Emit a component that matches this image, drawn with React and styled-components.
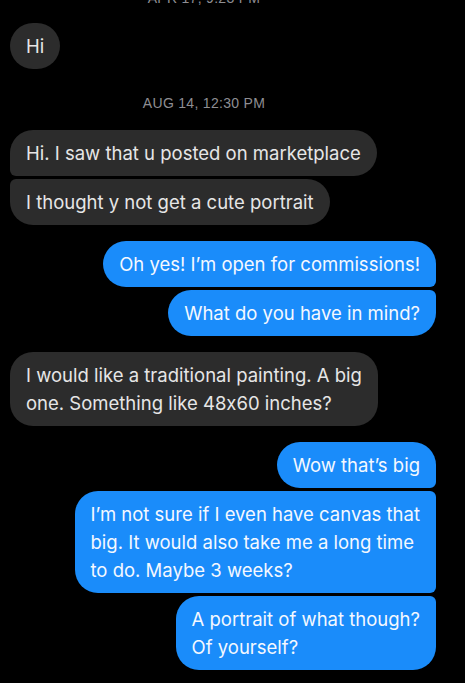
import React from 'react'
import styled, { createGlobalStyle, css } from 'styled-components'

const GlobalStyle = createGlobalStyle`
  html, body {
    margin: 0;
    padding: 0;
    background: #000;
  }
  body {
    font-family: Inter, "Liberation Sans", Arial, sans-serif;
    font-feature-settings: "calt" 0;
    -webkit-font-smoothing: antialiased;
  }
`

const Thread = styled.div`
  display: flex;
  flex-direction: column;
  padding: 0 29px 0 10px;
  margin-top: -12px;
  height: 695px;
  overflow: hidden;
`

const Stamp = styled.div`
  color: #8e8e93;
  font-family: "Liberation Sans", Arial, sans-serif;
  font-size: 14px;
  letter-spacing: 0.3px;
  line-height: 20px;
  text-align: center;
  padding-right: 38px;
  margin: ${(p) => (p.first ? '0 0 15px' : '24px 0 17px')};
`

const Group = styled.div`
  display: flex;
  flex-direction: column;
  align-items: ${(p) => (p.out ? 'flex-end' : 'flex-start')};
  gap: 3px;
  & + & {
    margin-top: 16px;
  }
`

const big = 23
const small = 6

const corners = {
  single: [big, big, big, big],
  first: [big, big, big, small],
  middle: [small, big, big, small],
  last: [small, big, big, big]
}

const Bubble = styled.div`
  box-sizing: border-box;
  padding: 9px 16px;
  font-size: 18.5px;
  line-height: 28px;
  white-space: nowrap;
  ${(p) => {
    const [tl, tr, br, bl] = corners[p.pos]
    return p.out
      ? css`
          background: #1a8cfa;
          color: #f4f8ff;
          border-radius: ${tr}px ${tl}px ${bl}px ${br}px;
        `
      : css`
          background: #2c2c2c;
          color: #e6e6e6;
          border-radius: ${tl}px ${tr}px ${br}px ${bl}px;
        `
  }}
`

const thread = [
  { stamp: 'APR 17, 9:23 PM', first: true },
  { out: false, lines: [['Hi']] },
  { stamp: 'AUG 14, 12:30 PM' },
  {
    out: false,
    lines: [['Hi. I saw that u posted on marketplace'], ['I thought y not get a cute portrait']]
  },
  {
    out: true,
    lines: [['Oh yes! I’m open for commissions!'], ['What do you have in mind?']]
  },
  {
    out: false,
    lines: [['I would like a traditional painting. A big', 'one. Something like 48x60 inches?']]
  },
  {
    out: true,
    lines: [
      ['Wow that’s big'],
      [
        'I’m not sure if I even have canvas that',
        'big. It would also take me a long time',
        'to do. Maybe 3 weeks?'
      ],
      ['A portrait of what though?', 'Of yourself?']
    ]
  }
]

function position (i, n) {
  if (n === 1) return 'single'
  if (i === 0) return 'first'
  if (i === n - 1) return 'last'
  return 'middle'
}

export default function App () {
  return (
    <>
      <GlobalStyle />
      <Thread>
        {thread.map((item, k) =>
          item.stamp
            ? <Stamp key={k} first={item.first}>{item.stamp}</Stamp>
            : (
              <Group key={k} out={item.out}>
                {item.lines.map((msg, i) => (
                  <Bubble key={i} out={item.out} pos={position(i, item.lines.length)}>
                    {msg.map((line, j) => (
                      <React.Fragment key={j}>
                        {j > 0 && <br />}
                        {line}
                      </React.Fragment>
                    ))}
                  </Bubble>
                ))}
              </Group>
              )
        )}
      </Thread>
    </>
  )
}
